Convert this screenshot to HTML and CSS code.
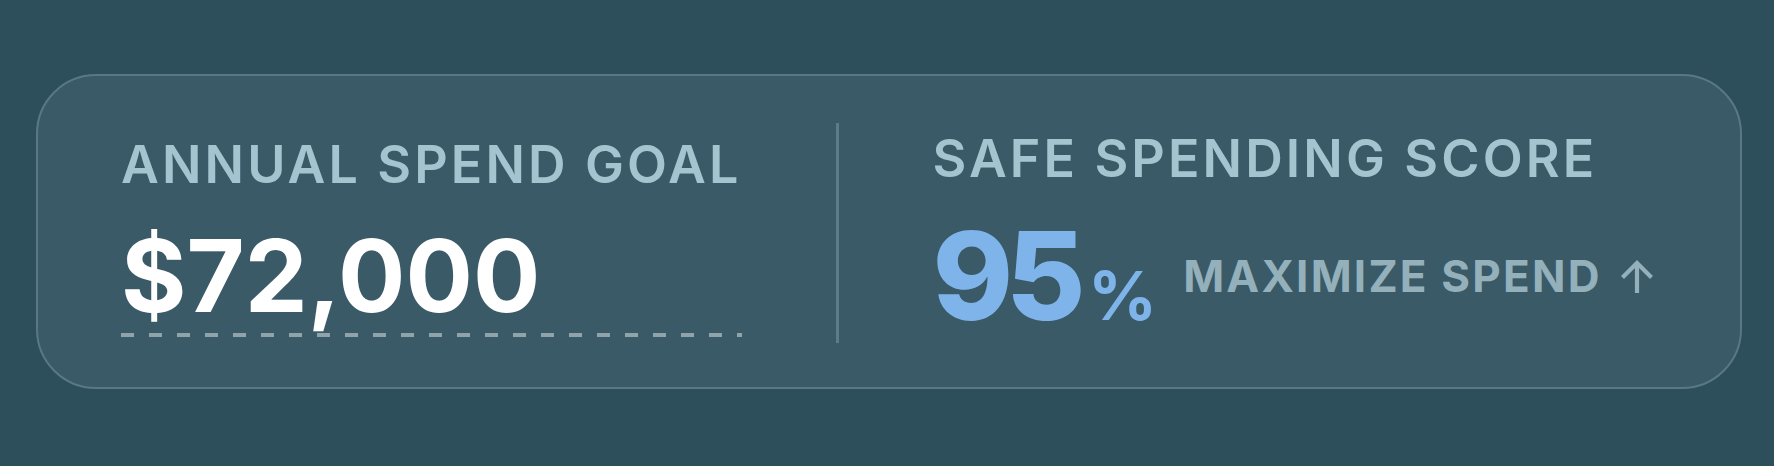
FILE: index.html
```html
<!DOCTYPE html>
<html lang="en">

<head>
    <meta charset="UTF-8">
    <meta name="viewport" content="width=device-width, initial-scale=1.0">
    <title>Spend Goal</title>
    <link rel="stylesheet" href="styles.css">
</head>

<body>

    <div class="spend-card">
        <div class="goal-box">
            <div class="box-label">ANNUAL SPEND GOAL</div>
            <div class="goal-value">$72,000</div>
        </div>

        <div class="divider"></div>

        <div class="score-box">
            <div class="box-label">SAFE SPENDING SCORE</div>
            <div class="score-row">
                <div class="score">
                    <span class="score-num">95</span>
                    <span class="score-pct">%</span>
                </div>
                <div class="score-hint">
                    MAXIMIZE SPEND
                    <svg class="arrow-up" width="34" height="34" viewBox="0 0 34 34">
                        <path d="M17 34 V4 M2.5 18.5 L17 4 L31.5 18.5" fill="none" stroke="currentColor" stroke-width="4.2" />
                    </svg>
                </div>
            </div>
        </div>
    </div>

</body>

</html>
```

FILE: styles.css
```css
body {
    margin: 0;
    padding: 74px 32px 0 36px;
    background: #2d4f5c;
    font-family: Inter, "Noto Sans", sans-serif;
    height: 466px;
    box-sizing: border-box;
}

.spend-card {
    display: flex;
    align-items: flex-start;
    gap: 94px;
    height: 315px;
    box-sizing: border-box;
    padding: 57px 83px 0;
    background: #3a5a67;
    border: 2px solid #5a7884;
    border-radius: 60px;
}

.box-label {
    font-size: 52px;
    line-height: 1;
    font-weight: 600;
    letter-spacing: 0.06em;
    color: #a4c4cf;
    white-space: nowrap;
}

.goal-box {
    flex-shrink: 0;
    padding-top: 6px;
}

.goal-value {
    margin-top: 35px;
    padding-bottom: 11px;
    font-size: 100px;
    line-height: 1;
    font-weight: 700;
    color: #fff;
    background-image: repeating-linear-gradient(to right, #8ea3aa 0 13px, transparent 13px 28px);
    background-size: 100% 4px;
    background-position: left bottom;
    background-repeat: no-repeat;
}

.divider {
    flex-shrink: 0;
    align-self: center;
    width: 3px;
    height: 220px;
    margin-top: -55px;
    background: #5f7b86;
}

.score-box {
    flex-shrink: 0;
}

.score-row {
    display: flex;
    align-items: center;
    gap: 26px;
    margin-top: 30px;
}

.score {
    display: flex;
    align-items: baseline;
    gap: 10px;
    color: #7eb4ea;
    font-weight: 800;
}

.score-num {
    font-size: 122px;
    line-height: 1;
    letter-spacing: -0.06em;
}

.score-pct {
    font-size: 68px;
    line-height: 1;
    font-weight: 700;
}

.score-hint {
    display: flex;
    align-items: center;
    gap: 18px;
    font-size: 44px;
    line-height: 1;
    font-weight: 700;
    letter-spacing: 0.05em;
    color: #93b0bb;
    white-space: nowrap;
}

.arrow-up {
    display: block;
}
```
